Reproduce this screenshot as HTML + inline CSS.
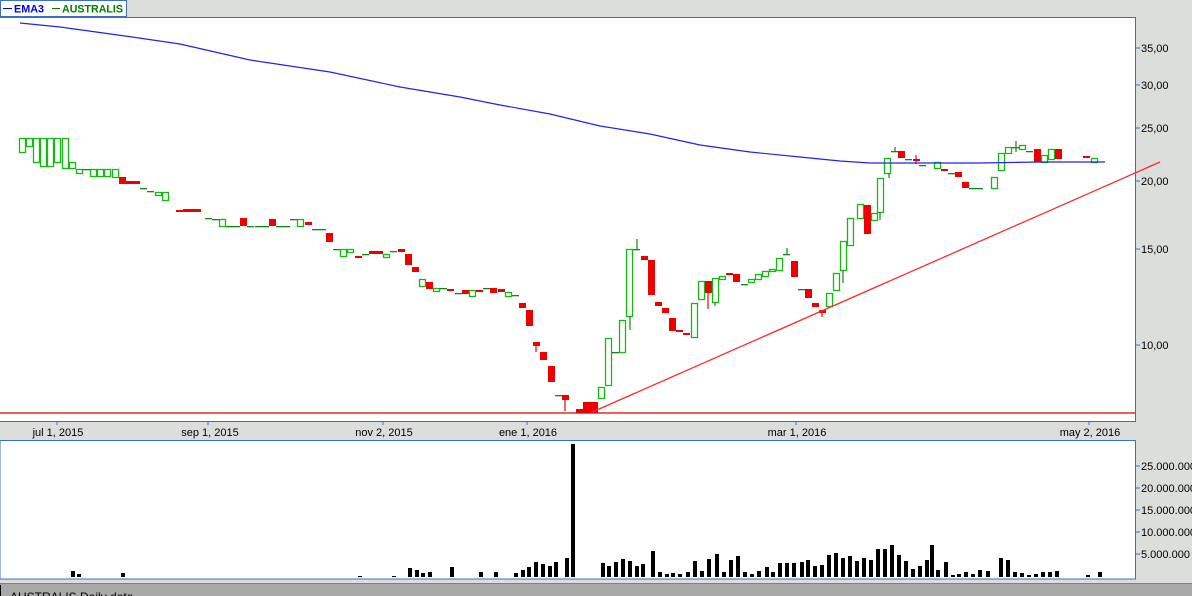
<!DOCTYPE html>
<html><head><meta charset="utf-8"><style>
body{margin:0;width:1192px;height:596px;overflow:hidden;background:#dcdedb;font-family:"Liberation Sans",sans-serif}
svg{position:absolute;left:0;top:0}
</style></head><body>
<svg id="s" width="1192" height="596" xmlns="http://www.w3.org/2000/svg" font-family="Liberation Sans, sans-serif">
<rect x="0" y="0" width="1192" height="596" fill="#dcdedb"/>
<rect x="0" y="17" width="1135" height="404" fill="#fff"/>
<line x1="0" y1="17.5" x2="1136" y2="17.5" stroke="#3a6fc4"/>
<line x1="1135.5" y1="17" x2="1135.5" y2="421" stroke="#3a6fc4"/>
<line x1="0" y1="421.5" x2="1136" y2="421.5" stroke="#3a6fc4"/>
<rect x="0.5" y="0.5" width="126" height="16" fill="#fff" stroke="#3a6fc4"/>
<line x1="3" y1="8.5" x2="12" y2="8.5" stroke="#0000ee"/>
<text x="14" y="12.5" font-size="11" font-weight="bold" fill="#0000ee" textLength="30" lengthAdjust="spacingAndGlyphs">EMA3</text>
<line x1="52" y1="8.5" x2="60" y2="8.5" stroke="#008000"/>
<text x="62" y="12.5" font-size="11" font-weight="bold" fill="#008000" textLength="61" lengthAdjust="spacingAndGlyphs">AUSTRALIS</text>
<g id="c"></g>
<g stroke="#118811" stroke-width="1.2">
<line x1="637" y1="239" x2="637" y2="249"/><line x1="1016" y1="141" x2="1016" y2="152"/><line x1="787" y1="248" x2="787" y2="255"/>
<line x1="895" y1="147" x2="895" y2="152"/><line x1="630" y1="316" x2="630" y2="330"/><line x1="843" y1="270" x2="843" y2="283"/>
<line x1="715" y1="302" x2="715" y2="306"/><line x1="889" y1="173" x2="889" y2="178"/><line x1="880" y1="212" x2="880" y2="220"/>
</g>
<g stroke="#ee0000" stroke-width="1.2">
<line x1="565" y1="400" x2="565" y2="411"/><line x1="708" y1="293" x2="708" y2="309"/><line x1="822" y1="313" x2="822" y2="317"/>
<line x1="916" y1="155" x2="916" y2="164"/><line x1="536" y1="346" x2="536" y2="352"/>
</g>
<polyline fill="none" stroke="#2222ee" stroke-width="1.2" points="20,23 60,27 125,36 180,44 250,60 330,72 400,87 460,97 500,105 550,114 600,126 650,134 700,145 750,152 800,157 840,161 870,163 910,163 980,163 1040,162 1105,162"/>
<line x1="590" y1="413" x2="1160" y2="162" stroke="#ff2a2a" stroke-width="1.3"/>
<line x1="0" y1="413" x2="1135" y2="413" stroke="#e00000" stroke-width="1.3"/>
<g font-size="11" fill="#000">
<line x1="1136" y1="48" x2="1140" y2="48" stroke="#3a6fc4"/><text x="1141" y="52">35,00</text>
<line x1="1136" y1="85" x2="1140" y2="85" stroke="#3a6fc4"/><text x="1141" y="89">30,00</text>
<line x1="1136" y1="128" x2="1140" y2="128" stroke="#3a6fc4"/><text x="1141" y="132">25,00</text>
<line x1="1136" y1="181" x2="1140" y2="181" stroke="#3a6fc4"/><text x="1141" y="185">20,00</text>
<line x1="1136" y1="249" x2="1140" y2="249" stroke="#3a6fc4"/><text x="1141" y="253">15,00</text>
<line x1="1136" y1="345" x2="1140" y2="345" stroke="#3a6fc4"/><text x="1141" y="349">10,00</text>
</g>
<g font-size="11" fill="#000" text-anchor="middle">
<line x1="57" y1="422" x2="57" y2="425" stroke="#3a6fc4"/><text x="58" y="436">jul 1, 2015</text>
<line x1="208" y1="422" x2="208" y2="425" stroke="#3a6fc4"/><text x="210" y="436">sep 1, 2015</text>
<line x1="383" y1="422" x2="383" y2="425" stroke="#3a6fc4"/><text x="384" y="436">nov 2, 2015</text>
<line x1="527" y1="422" x2="527" y2="425" stroke="#3a6fc4"/><text x="528" y="436">ene 1, 2016</text>
<line x1="796" y1="422" x2="796" y2="425" stroke="#3a6fc4"/><text x="797" y="436">mar 1, 2016</text>
<line x1="1089" y1="422" x2="1089" y2="425" stroke="#3a6fc4"/><text x="1090" y="436">may 2, 2016</text>
</g>
<rect x="0" y="440.5" width="1135.5" height="138.5" fill="#fff" stroke="#3a6fc4"/>
<g id="v"></g>
<g font-size="11" fill="#000">
<line x1="1136" y1="466" x2="1140" y2="466" stroke="#3a6fc4"/><text x="1141" y="470">25.000.000</text>
<line x1="1136" y1="488" x2="1140" y2="488" stroke="#3a6fc4"/><text x="1141" y="492">20.000.000</text>
<line x1="1136" y1="510" x2="1140" y2="510" stroke="#3a6fc4"/><text x="1141" y="514">15.000.000</text>
<line x1="1136" y1="532" x2="1140" y2="532" stroke="#3a6fc4"/><text x="1141" y="536">10.000.000</text>
<line x1="1136" y1="554" x2="1140" y2="554" stroke="#3a6fc4"/><text x="1141" y="558">5.000.000</text>
</g>
<line x1="0" y1="583.5" x2="1192" y2="583.5" stroke="#808080"/>
<rect x="0" y="584" width="1192" height="12" fill="#a9a9a9"/>
<line x1="0.5" y1="585" x2="0.5" y2="596" stroke="#000"/>
<text x="10" y="601" font-size="12" fill="#000">AUSTRALIS  Daily data</text>
</svg>
<script>
var C=[[19,138,152,'g'],[26,138,146,'g'],[33,138,162,'g'],[40,138,166,'g'],[47,138,166,'g'],[54,138,162,'g'],[62,138,168,'g'],[69,162,168,'g'],[76,169,173,'g'],[83,169,169,'l'],[90,169,176,'g'],[97,169,176,'g'],[104,169,176,'g'],[112,169,177,'g'],[119,177,184,'r'],[126,181,184,'r',13],[140,188,188,'l'],[147,191,191,'l'],[155,192,195,'g'],[162,192,200,'g'],[176,210,212,'r'],[183,209,212,'r',17],[205,218,218,'l'],[212,219,219,'l'],[219,219,226,'g'],[226,226,226,'l',13],[240,218,226,'r'],[247,226,226,'l'],[255,226,226,'l',13],[269,219,226,'r'],[276,226,226,'l',13],[290,219,219,'l'],[297,219,226,'g'],[305,222,225,'r'],[312,229,229,'l',13],[326,233,242,'r'],[333,249,249,'l'],[340,249,256,'g'],[347,249,252,'g'],[355,256,258,'r'],[362,254,254,'l'],[369,251,254,'r',13],[383,254,257,'g'],[390,251,251,'l'],[398,249,252,'r'],[405,254,265,'r'],[412,267,272,'r'],[419,279,286,'g'],[426,282,289,'r'],[433,288,291,'g'],[440,288,288,'l'],[447,289,290,'r'],[455,293,293,'l'],[462,290,294,'r'],[469,290,296,'g'],[476,290,292,'r'],[483,288,288,'l'],[490,288,293,'r'],[498,289,292,'r'],[505,292,296,'g'],[512,295,295,'l'],[519,303,308,'r'],[526,310,326,'r'],[533,342,346,'r'],[540,352,360,'r'],[548,366,382,'r'],[555,395,395,'l'],[562,395,400,'r'],[576,409,413,'r'],[583,402,413,'r',14],[598,387,398,'g'],[605,338,385,'g'],[612,352,352,'l'],[619,320,352,'g'],[626,249,316,'g'],[633,249,249,'l'],[641,256,260,'r'],[648,260,295,'r'],[655,302,306,'r'],[662,308,313,'r'],[669,318,331,'r'],[676,330,332,'r'],[683,333,335,'r'],[691,303,337,'g'],[698,281,299,'g'],[705,281,293,'r'],[712,278,302,'g'],[719,276,279,'g'],[726,273,275,'r'],[733,274,282,'r'],[741,284,284,'l'],[748,279,282,'g'],[755,274,279,'g'],[762,271,276,'g'],[769,269,271,'g'],[776,258,270,'g'],[783,254,254,'l'],[791,261,277,'r'],[798,289,289,'l'],[805,289,298,'r'],[812,303,307,'r'],[819,310,313,'r'],[826,293,306,'g'],[833,273,290,'g'],[840,241,270,'g'],[847,218,245,'g'],[857,204,218,'g'],[864,205,234,'r'],[871,213,220,'g'],[877,178,212,'g'],[884,158,173,'g'],[891,151,151,'l'],[898,151,158,'r'],[905,159,159,'l'],[913,159,159,'r'],[919,165,165,'l'],[934,162,168,'g'],[941,169,171,'r'],[948,173,173,'l'],[955,172,177,'r'],[962,182,188,'r'],[969,188,188,'l',13],[991,177,188,'g'],[998,153,170,'g'],[1005,147,153,'g'],[1012,147,147,'l'],[1019,145,149,'g'],[1026,151,151,'l'],[1034,149,162,'r'],[1041,155,162,'g'],[1048,149,159,'g'],[1055,149,159,'r'],[1083,156,158,'r'],[1091,158,162,'g']];
var h='';C.forEach(function(c){var w=c[4]||6,t=c[3];
if(t=='g')h+='<rect x="'+(c[0]+.5)+'" y="'+(c[1]+.5)+'" width="'+w+'" height="'+Math.max(1,c[2]-c[1])+'" fill="none" stroke="#11bb11" stroke-width="1.3"/>';
else if(t=='r')h+='<rect x="'+c[0]+'" y="'+c[1]+'" width="'+(w+1)+'" height="'+Math.max(2,c[2]-c[1])+'" fill="#ee0000"/>';
else h+='<rect x="'+c[0]+'" y="'+c[1]+'" width="'+(w+1)+'" height="1.3" fill="#118811"/>';});
document.getElementById('c').innerHTML=h;
var V=[[71,571],[77,574],[121,573],[358,576],[392,576],[408,568],[415,570],[421,573],[428,572],[450,567],[479,572],[494,572],[514,573],[521,570],[527,567],[534,562],[541,564],[548,566],[554,562],[565,558],[571,444],[601,563],[607,566],[614,562],[621,559],[628,561],[635,566],[641,564],[651,551],[658,572],[665,574],[671,573],[678,574],[686,572],[693,561],[700,571],[707,559],[715,554],[722,572],[729,560],[736,556],[743,572],[750,574],[757,571],[765,567],[771,572],[778,563],[785,563],[792,563],[800,562],[806,560],[813,566],[820,565],[827,555],[834,553],[841,558],[848,556],[855,561],[862,558],[869,560],[876,549],[883,549],[890,545],[897,555],[904,561],[911,569],[918,566],[925,560],[930,545],[936,570],[944,562],[951,575],[957,574],[964,572],[971,574],[978,570],[986,571],[999,558],[1006,560],[1013,572],[1020,573],[1027,575],[1034,574],[1041,572],[1048,572],[1055,571],[1086,575],[1098,572]];
var g='';V.forEach(function(v){g+='<rect x="'+v[0]+'" y="'+v[1]+'" width="4" height="'+(577-v[1])+'" fill="#000"/>';});
document.getElementById('v').innerHTML=g;
</script>
</body></html>
